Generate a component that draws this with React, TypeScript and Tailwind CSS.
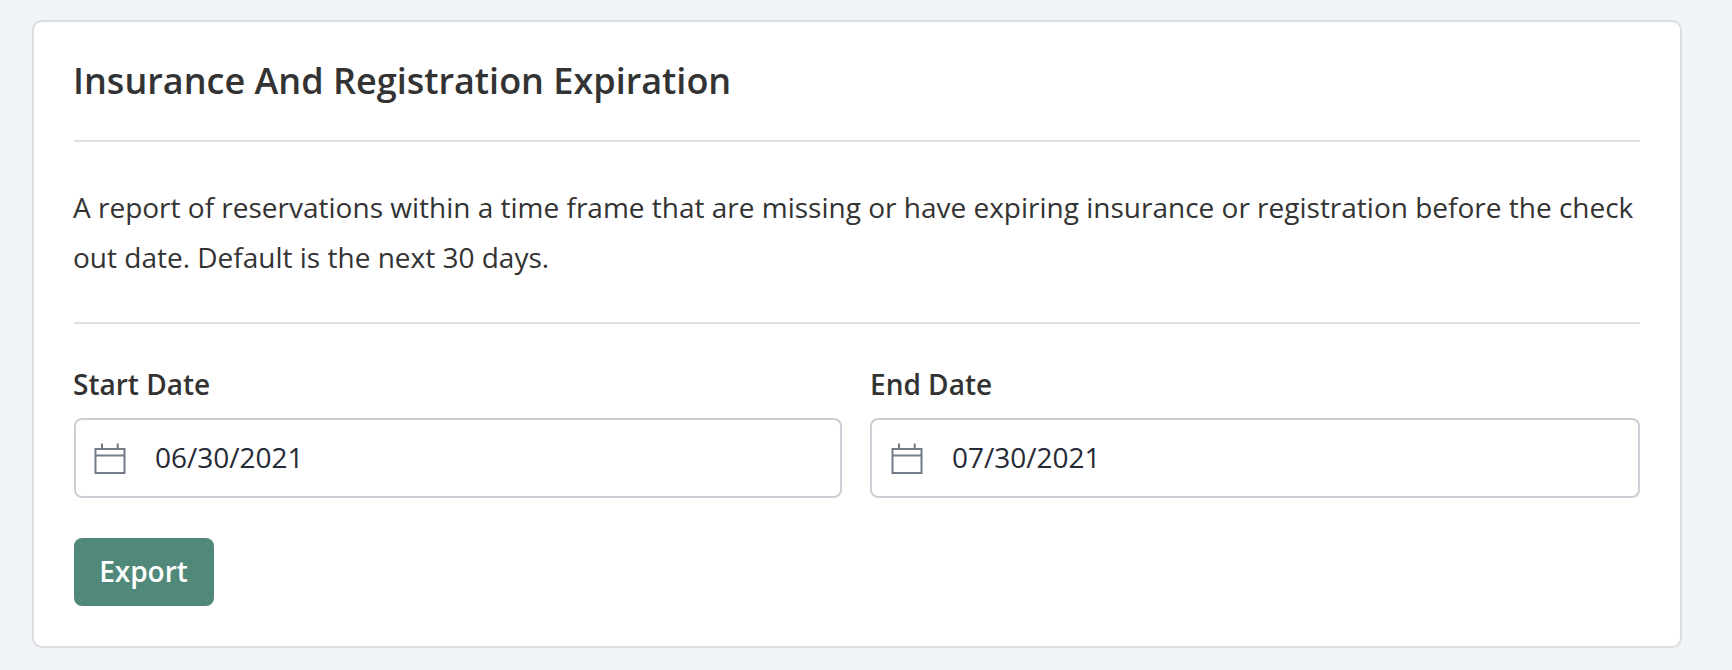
const fields = [
  { label: 'Start Date', value: '06/30/2021', labelClass: '-indent-px', inputClass: 'pl-[18px]' },
  { label: 'End Date', value: '07/30/2021', labelClass: 'indent-0', inputClass: 'pl-[19px]' },
];

const CalendarIcon = () => (
  <svg className="w-8 h-8 shrink-0" viewBox="0 0 32 32" fill="none" stroke="#737a88" strokeWidth="2">
    <path d="M1.5 7h29v24h-29zM1.5 13.5h29M8 1.5v5M23.7 1.5v5" />
  </svg>
);

export default function App() {
  return (
    <div className="h-[670px] bg-[#f0f4f7] pt-5 pl-8 font-['Open_Sans',sans-serif] text-[#333333]">
      <div className="w-[1650px] h-[628px] bg-white border-2 border-[#dcdde0] rounded-[10px] px-10">
        <h1 className="h-[118px] pt-[35px] -indent-px text-[36px] leading-[48px] font-semibold">Insurance And Registration Expiration</h1>
        <div className="h-[184px] border-y-2 border-[#dcdfe4] pt-10">
          <p className="-ml-px text-[28px] leading-[50px]">
            A report of reservations within a time frame that are missing or have expiring insurance or registration before the check out date. Default is the next 30 days.
          </p>
        </div>
        <div className="grid grid-cols-[768px_1fr] gap-7 pt-10">
          {fields.map(({ label, value, labelClass, inputClass }) => (
            <label key={label}>
              <span className={`block h-[54px] text-[28px] leading-[40px] font-semibold ${labelClass}`}>{label}</span>
              <div className={`h-20 flex items-center border-2 border-[#cbd0d6] rounded-lg gap-[29px] ${inputClass}`}>
                <CalendarIcon />
                <span className="pb-0.5 text-[28px] leading-[40px] text-[#252a35]">{value}</span>
              </div>
            </label>
          ))}
        </div>
        <button className="mt-10 h-[68px] w-[140px] pb-0.5 pr-px bg-[#50897a] text-white text-[28px] font-semibold rounded-lg">Export</button>
      </div>
    </div>
  );
}
